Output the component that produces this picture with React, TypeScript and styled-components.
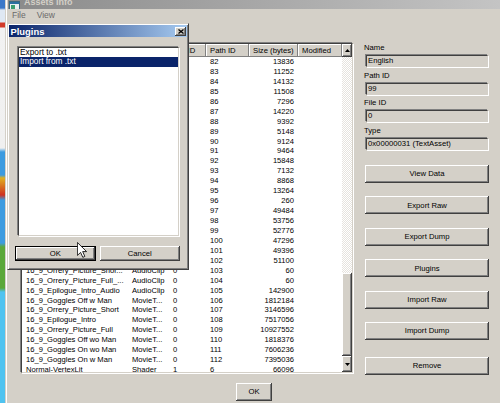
import React from "react"
import styled, { createGlobalStyle } from "styled-components"

const face = "#d4d0c8"
const shadow = "#808080"
const dark = "#404040"
const navy = "#0a246a"
const font = `"Liberation Sans", Arial, sans-serif`

const GlobalStyle = createGlobalStyle`
  html, body {
    margin: 0;
    padding: 0;
    background: ${face};
  }
  body {
    font-family: ${font};
    color: #000;
  }
`

const raised = `
  background: ${face};
  box-shadow: inset -1px -1px ${dark}, inset 1px 1px #fff, inset -2px -2px ${shadow};
`

const Screen = styled.div`
  position: relative;
  display: flex;
  width: 500px;
  height: 403px;
  overflow: hidden;
`

const DesktopEdge = styled.div`
  flex: none;
  width: 5px;
  background: linear-gradient(
    to bottom,
    #3b78c9 0px, #3b78c9 8px, #dfe8f3 10px, #dfe8f3 22px, #d23a2a 23px, #d23a2a 27px,
    #f2f2f2 28px, #f0f0f0 148px, #3c9be0 152px, #3c9be0 175px, #e0b020 178px, #d03020 195px,
    #3c9be0 200px, #3c9be0 243px, #5aa83a 247px, #5aa83a 288px, #4fc3f0 292px, #4fc3f0 403px
  );
`

const Window = styled.div`
  flex: 1;
  display: flex;
  flex-direction: column;
  background: ${face};
  border-left: 1px solid ${face};
  box-shadow: inset 1px 0 #fff;
  padding-left: 2px;
`

const TitleBar = styled.div`
  height: 9px;
  display: flex;
  align-items: flex-end;
  gap: 4px;
  padding-left: 1px;
  overflow: hidden;
  background: linear-gradient(to right, #8a8a8a, #c4c4c4);
`

const TitleText = styled.span`
  font-size: 9px;
  font-weight: bold;
  line-height: 1;
  margin-bottom: 2px;
  color: ${face};
`

const MenuBar = styled.div`
  height: 12px;
  display: flex;
  align-items: center;
  gap: 11px;
  padding-left: 4px;
  font-size: 8.5px;
  color: #6a6a6a;
`

const Client = styled.div`
  display: flex;
  flex-direction: column;
  padding-top: 22px;
`

const Main = styled.div`
  display: flex;
  gap: 11px;
  padding-left: 13px;
`

const ListFrame = styled.div`
  position: relative;
  width: 332px;
  height: 330px;
  box-sizing: border-box;
  display: grid;
  grid-template-columns: 320px 10px;
  background: #fff;
  border: 1px solid;
  border-color: ${dark} ${face} ${face} ${dark};
  box-shadow: -1px -1px 0 ${shadow}, 1px 1px 0 #fff;
  overflow: hidden;
`

const Columns = styled.div`
  display: flex;
  flex-direction: column;
  overflow: hidden;
`

const colTemplate = "106px 41px 37px 43px 49px 44px"

const HeaderRow = styled.div`
  flex: none;
  display: grid;
  grid-template-columns: ${colTemplate};
  height: 13px;
`

const HeaderCell = styled.div`
  background: ${face};
  box-shadow: inset -1px -1px ${shadow}, inset 1px 1px #fff;
  font-size: 7.7px;
  line-height: 13px;
  padding: 0 4px;
  white-space: nowrap;
  overflow: hidden;
`

const DataRow = styled.div`
  flex: none;
  display: grid;
  grid-template-columns: ${colTemplate};
  height: 9.94px;
  line-height: 9.94px;
  font-size: 7.6px;
`

const Cell = styled.div<{ $right?: boolean }>`
  padding: 0 4px;
  text-align: ${p => (p.$right ? "right" : "left")};
  white-space: nowrap;
  overflow: hidden;
`

const ScrollBar = styled.div`
  display: flex;
  flex-direction: column;
`

const ScrollButton = styled.div<{ $h: number }>`
  ${raised}
  flex: none;
  height: ${p => p.$h}px;
  display: flex;
  align-items: center;
  justify-content: center;
`

const Track = styled.div`
  flex: 1;
  background: repeating-conic-gradient(#ffffff 0 25%, #e6e3de 0 50%) 0 0 / 2px 2px;
`

const Thumb = styled.div`
  ${raised}
  flex: none;
  height: 83px;
`

const Panel = styled.div`
  width: 124px;
  padding-left: 1px;
  display: flex;
  flex-direction: column;
  margin-top: 0;
`

const FieldLabel = styled.div`
  height: 10px;
  line-height: 10px;
  font-size: 7.7px;
  margin: 0 0 2px -1px;
`

const TextBox = styled.div`
  height: 12px;
  box-sizing: border-box;
  margin: 0 1px 3.7px 1px;
  padding-left: 1px;
  border: 1px solid;
  border-color: ${dark} ${face} ${face} ${dark};
  box-shadow: -1px -1px 0 ${shadow}, 1px 1px 0 #fff;
  font-size: 7.7px;
  line-height: 10px;
  white-space: nowrap;
  overflow: hidden;
`

const ButtonStack = styled.div`
  display: flex;
  flex-direction: column;
  gap: 13.4px;
  margin-top: 11.2px;
`

const Button = styled.div<{ $w?: number; $h?: number; $gap?: number }>`
  ${raised}
  width: ${p => (p.$w ? `${p.$w}px` : "auto")};
  height: ${p => p.$h ?? 18}px;
  margin-top: ${p => p.$gap ?? 0}px;
  box-sizing: border-box;
  display: flex;
  align-items: center;
  justify-content: center;
  font-size: 7.7px;
`

const DefaultButton = styled(Button)`
  border: 1px solid #000;
`

const Footer = styled.div`
  display: flex;
  justify-content: center;
  margin-top: 8px;
`

const Dialog = styled.div`
  position: absolute;
  left: 7px;
  top: 23px;
  width: 182px;
  height: 247px;
  box-sizing: border-box;
  display: flex;
  flex-direction: column;
  padding: 1px;
  background: ${face};
  border: 1px solid;
  border-color: ${face} ${dark} ${dark} ${face};
  box-shadow: inset 1px 1px #fff, inset -1px -1px ${shadow};
`

const DialogTitle = styled.div`
  height: 12px;
  flex: none;
  display: flex;
  align-items: center;
  justify-content: space-between;
  padding-left: 1.5px;
  background: linear-gradient(to right, ${navy}, #a6caf0);
  color: #fff;
  font-size: 9.4px;
  font-weight: bold;
`

const CloseButton = styled.div`
  ${raised}
  width: 11px;
  height: 9px;
  margin-right: 1px;
  display: flex;
  align-items: center;
  justify-content: center;
`

const DialogBody = styled.div`
  flex: 1;
  display: flex;
  flex-direction: column;
  padding: 10px 7px 7px 6px;
`

const ListBox = styled.div`
  height: 189px;
  box-sizing: border-box;
  margin: 0 1px 0 3px;
  background: #fff;
  border: 1px solid;
  border-color: ${dark} ${face} ${face} ${dark};
  box-shadow: -1px -1px 0 ${shadow}, 1px 1px 0 #fff;
`

const ListItem = styled.div<{ $selected?: boolean }>`
  height: 9.3px;
  line-height: 9.3px;
  font-size: 8.3px;
  padding-left: 1px;
  background: ${p => (p.$selected ? navy : "transparent")};
  color: ${p => (p.$selected ? "#fff" : "#000")};
  white-space: nowrap;
`

const DialogButtons = styled.div`
  display: grid;
  grid-template-columns: 1fr 1fr;
  gap: 4px;
  margin-top: 10px;
`

const Cursor = styled.svg`
  position: absolute;
  left: 77px;
  top: 242px;
`

type Row = { name: string; type: string; fileId: string; pathId: string; size: string }

const coveredRows: [number, number][] = [
  [82, 13836], [83, 11252], [84, 14132], [85, 11508], [86, 7296], [87, 14220], [88, 9392],
  [89, 5148], [90, 9124], [91, 9464], [92, 15848], [93, 7132], [94, 8868], [95, 13264],
  [96, 260], [97, 49484], [98, 53756], [99, 52776], [100, 47296], [101, 49396], [102, 51100],
]

const rows: Row[] = [
  ...coveredRows.map(([p, s]) => ({ name: "", type: "", fileId: "0", pathId: String(p), size: String(s) })),
  { name: "16_9_Orrery_Picture_Shor...", type: "AudioClip", fileId: "0", pathId: "103", size: "60" },
  { name: "16_9_Orrery_Picture_Full_...", type: "AudioClip", fileId: "0", pathId: "104", size: "60" },
  { name: "16_9_Epilogue_Intro_Audio", type: "AudioClip", fileId: "0", pathId: "105", size: "142900" },
  { name: "16_9_Goggles Off w Man", type: "MovieT...", fileId: "0", pathId: "106", size: "1812184" },
  { name: "16_9_Orrery_Picture_Short", type: "MovieT...", fileId: "0", pathId: "107", size: "3146596" },
  { name: "16_9_Epilogue_Intro", type: "MovieT...", fileId: "0", pathId: "108", size: "7517056" },
  { name: "16_9_Orrery_Picture_Full", type: "MovieT...", fileId: "0", pathId: "109", size: "10927552" },
  { name: "16_9_Goggles Off wo Man", type: "MovieT...", fileId: "0", pathId: "110", size: "1818376" },
  { name: "16_9_Goggles On wo Man", type: "MovieT...", fileId: "0", pathId: "111", size: "7606236" },
  { name: "16_9_Goggles On w Man", type: "MovieT...", fileId: "0", pathId: "112", size: "7395036" },
  { name: "Normal-VertexLit", type: "Shader", fileId: "1", pathId: "6", size: "66096" },
]

const fields = [
  { label: "Name", value: "English" },
  { label: "Path ID", value: "99" },
  { label: "File ID", value: "0" },
  { label: "Type", value: "0x00000031 (TextAsset)" },
]

const actions = ["View Data", "Export Raw", "Export Dump", "Plugins", "Import Raw", "Import Dump"]

const Arrow = ({ up }: { up?: boolean }) => (
  <svg width="5" height="3" viewBox="0 0 5 3">
    <polygon points={up ? "0,3 5,3 2.5,0" : "0,0 5,0 2.5,3"} fill="#000" />
  </svg>
)

const AppIcon = () => (
  <svg width="11" height="10" viewBox="0 0 11 10" style={{ marginBottom: -2 }}>
    <rect x="0.5" y="0.5" width="10" height="9" fill="#e8f0f0" stroke="#3a6a80" />
    <rect x="1" y="1" width="9" height="2" fill="#2a70a0" />
    <rect x="2" y="4" width="4" height="4" fill="#3aa070" />
  </svg>
)

const AssetList = () => (
  <ListFrame>
    <Columns>
      <HeaderRow>
        <HeaderCell>Name</HeaderCell>
        <HeaderCell>Type</HeaderCell>
        <HeaderCell>File ID</HeaderCell>
        <HeaderCell>Path ID</HeaderCell>
        <HeaderCell>Size (bytes)</HeaderCell>
        <HeaderCell>Modified</HeaderCell>
      </HeaderRow>
      {rows.map(r => (
        <DataRow key={r.pathId}>
          <Cell>{r.name}</Cell>
          <Cell>{r.type}</Cell>
          <Cell>{r.fileId}</Cell>
          <Cell>{r.pathId}</Cell>
          <Cell $right>{r.size}</Cell>
          <Cell />
        </DataRow>
      ))}
    </Columns>
    <ScrollBar>
      <ScrollButton $h={13}>
        <Arrow up />
      </ScrollButton>
      <Track />
      <Thumb />
      <ScrollButton $h={16}>
        <Arrow />
      </ScrollButton>
    </ScrollBar>
  </ListFrame>
)

const InfoPanel = () => (
  <Panel>
    {fields.map(f => (
      <React.Fragment key={f.label}>
        <FieldLabel>{f.label}</FieldLabel>
        <TextBox>{f.value}</TextBox>
      </React.Fragment>
    ))}
    <ButtonStack>
      {actions.map(a => (
        <Button key={a}>{a}</Button>
      ))}
    </ButtonStack>
    <Button $gap={17}>Remove</Button>
  </Panel>
)

const PluginsDialog = () => (
  <Dialog>
    <DialogTitle>
      <span>Plugins</span>
      <CloseButton>
        <svg width="6" height="5" viewBox="0 0 6 5">
          <path d="M0.5 0.5 L5.5 4.5 M5.5 0.5 L0.5 4.5" stroke="#000" strokeWidth="1.3" />
        </svg>
      </CloseButton>
    </DialogTitle>
    <DialogBody>
      <ListBox>
        <ListItem>Export to .txt</ListItem>
        <ListItem $selected>Import from .txt</ListItem>
      </ListBox>
      <DialogButtons>
        <DefaultButton $h={15}>OK</DefaultButton>
        <Button $h={15}>Cancel</Button>
      </DialogButtons>
    </DialogBody>
  </Dialog>
)

export default function App() {
  return (
    <>
      <GlobalStyle />
      <Screen>
        <DesktopEdge />
        <Window>
          <TitleBar>
            <AppIcon />
            <TitleText>Assets Info</TitleText>
          </TitleBar>
          <MenuBar>
            <span>File</span>
            <span>View</span>
          </MenuBar>
          <Client>
            <Main>
              <AssetList />
              <InfoPanel />
            </Main>
            <Footer>
              <Button $w={36}>OK</Button>
            </Footer>
          </Client>
        </Window>
        <PluginsDialog />
        <Cursor width="10" height="16" viewBox="0 0 12 19">
          <path d="M0.5 0.5 L0.5 16 L4.3 12.4 L7 18.3 L9.4 17.2 L6.8 11.4 L11.5 11.4 Z" fill="#fff" stroke="#000" strokeWidth="1" />
        </Cursor>
      </Screen>
    </>
  )
}
